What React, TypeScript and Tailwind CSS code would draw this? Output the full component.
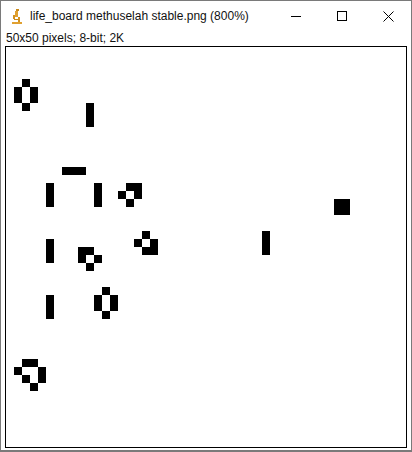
const cells: [number, number][] = [
  // beehive top-left
  [2, 4], [1, 5], [3, 5], [1, 6], [3, 6], [2, 7],
  // blinker
  [10, 7], [10, 8], [10, 9],
  // horizontal bar
  [7, 15], [8, 15], [9, 15],
  // verticals
  [5, 17], [5, 18], [5, 19],
  [11, 17], [11, 18], [11, 19],
  [5, 24], [5, 25], [5, 26],
  [5, 31], [5, 32], [5, 33],
  [32, 23], [32, 24], [32, 25],
  // boats
  [15, 17], [16, 17], [14, 18], [16, 18], [15, 19],
  [17, 23], [16, 24], [18, 24], [17, 25], [18, 25],
  [9, 25], [10, 25], [9, 26], [11, 26], [10, 27],
  // beehive lower
  [12, 30], [11, 31], [13, 31], [11, 32], [13, 32], [12, 33],
  // loaf
  [2, 39], [3, 39], [1, 40], [4, 40], [2, 41], [4, 41], [3, 42],
  // block
  [41, 19], [42, 19], [41, 20], [42, 20],
];

function Microscope() {
  return (
    <svg width="10" height="16" viewBox="0 0 10 16" shapeRendering="crispEdges">
      <rect x="4" y="0" width="3" height="2" fill="#c98a1c" />
      <rect x="3" y="2" width="3" height="6" fill="#e0a030" />
      <rect x="1" y="6" width="2" height="4" fill="#d39220" />
      <rect x="6" y="8" width="2" height="5" fill="#d39220" />
      <rect x="2" y="10" width="5" height="1" fill="#c98a1c" />
      <rect x="0" y="13" width="10" height="2" fill="#e0a030" />
    </svg>
  );
}

export default function App() {
  return (
    <div
      className="relative h-[452px] w-[412px] overflow-hidden border-x border-t border-[#7a7a7a] bg-white text-black"
      style={{ fontFamily: '"Liberation Sans", Arial, sans-serif' }}
    >
      <div className="flex h-[30px] items-center">
        <div className="ml-[11px] mt-[1px] flex w-[18px]">
          <Microscope />
        </div>
        <span className="text-[12px] leading-none text-[#111]">
          life_board methuselah stable.png (800%)
        </span>
        <div className="ml-auto flex h-full items-center">
          <div className="flex w-[46px] justify-center">
            <div className="h-px w-[10px] bg-black" />
          </div>
          <div className="flex w-[46px] justify-center">
            <div className="h-[10px] w-[10px] border border-black" />
          </div>
          <div className="flex w-[46px] justify-center">
            <svg width="11" height="11" viewBox="0 0 11 11">
              <path d="M0.5 0.5 L10.5 10.5 M10.5 0.5 L0.5 10.5" stroke="black" strokeWidth="1" />
            </svg>
          </div>
        </div>
      </div>
      <div className="h-[14px] pl-[5px] text-[12px] leading-[14px] text-[#111]">
        50x50 pixels; 8-bit; 2K
      </div>
      <div className="ml-[4px] mt-px w-[402px] border border-black">
        <svg width="400" height="400" viewBox="0 0 50 50" shapeRendering="crispEdges" className="block">
          <rect width="50" height="50" fill="white" />
          {cells.map(([c, r], i) => (
            <rect key={i} x={c} y={r} width="1" height="1" fill="black" />
          ))}
        </svg>
      </div>
      <div className="absolute bottom-0 left-0 h-[2px] w-full bg-[#7a7a7a]" />
    </div>
  );
}
